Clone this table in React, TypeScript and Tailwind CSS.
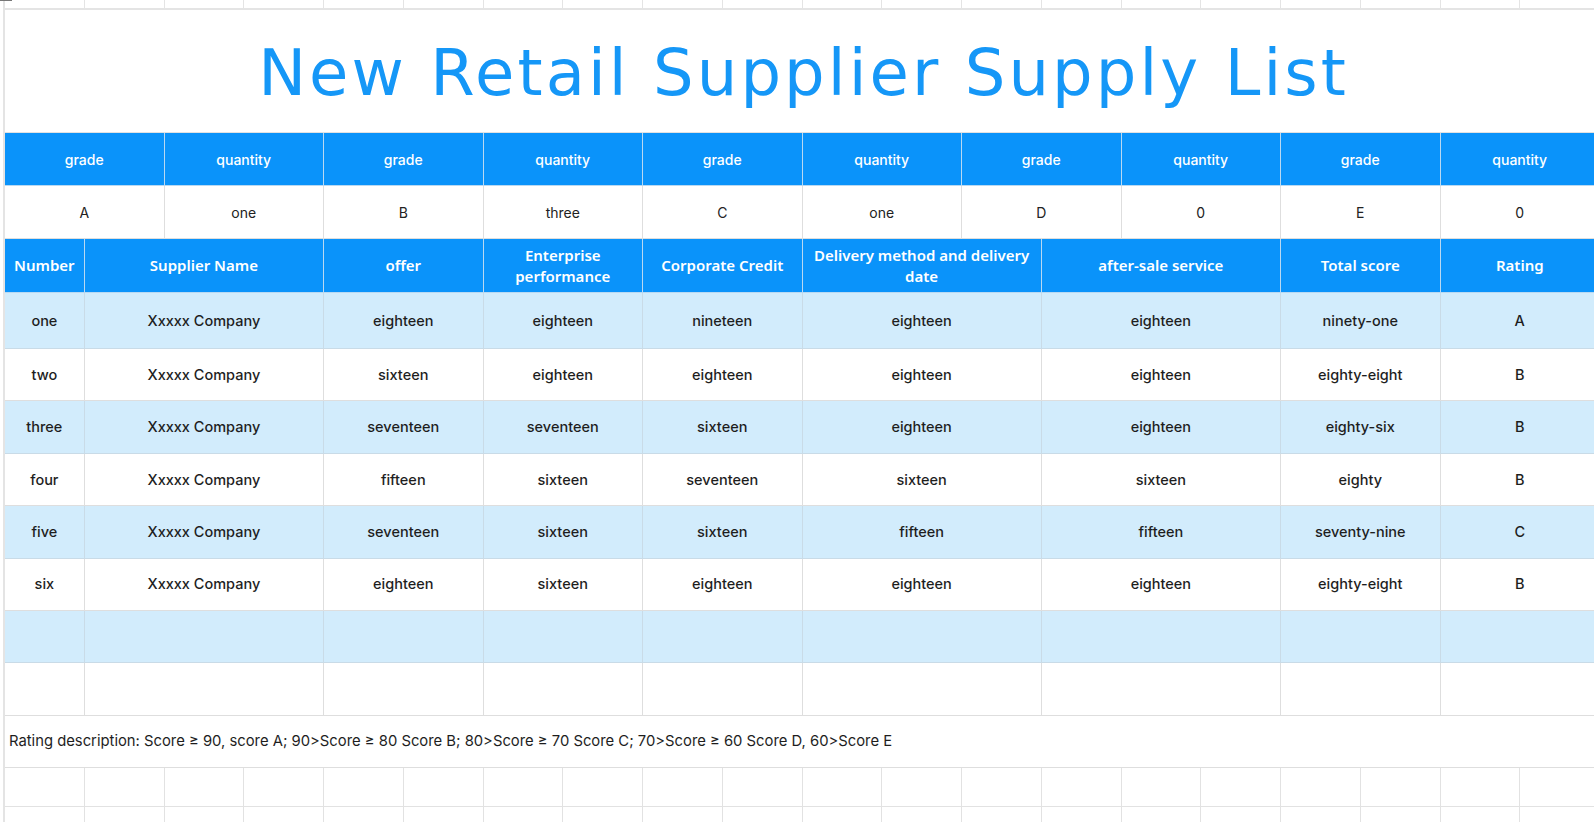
import React from "react";

const GRID = "grid grid-cols-[repeat(20,79.75px)]";

const head1 = ["grade", "quantity", "grade", "quantity", "grade", "quantity", "grade", "quantity", "grade", "quantity"];
const vals = ["A", "one", "B", "three", "C", "one", "D", "0", "E", "0"];

const head2: [string, string][] = [
  ["Number", "col-span-1"],
  ["Supplier Name", "col-span-3"],
  ["offer", "col-span-2"],
  ["Enterprise performance", "col-span-2"],
  ["Corporate Credit", "col-span-2"],
  ["Delivery method and delivery date", "col-span-3"],
  ["after-sale service", "col-span-3"],
  ["Total score", "col-span-2"],
  ["Rating", "col-span-2"],
];

const rows: string[][] = [
  ["one", "Xxxxx Company", "eighteen", "eighteen", "nineteen", "eighteen", "eighteen", "ninety-one", "A"],
  ["two", "Xxxxx Company", "sixteen", "eighteen", "eighteen", "eighteen", "eighteen", "eighty-eight", "B"],
  ["three", "Xxxxx Company", "seventeen", "seventeen", "sixteen", "eighteen", "eighteen", "eighty-six", "B"],
  ["four", "Xxxxx Company", "fifteen", "sixteen", "seventeen", "sixteen", "sixteen", "eighty", "B"],
  ["five", "Xxxxx Company", "seventeen", "sixteen", "sixteen", "fifteen", "fifteen", "seventy-nine", "C"],
  ["six", "Xxxxx Company", "eighteen", "sixteen", "eighteen", "eighteen", "eighteen", "eighty-eight", "B"],
  ["", "", "", "", "", "", "", "", ""],
  ["", "", "", "", "", "", "", "", ""],
];

function GridRow({ h }: { h: string }) {
  return (
    <div className={GRID}>
      {Array.from({ length: 20 }).map((_, i) => (
        <div key={i} className={`${h} border-r border-b border-[#e2e2e2]`} />
      ))}
    </div>
  );
}

export default function App() {
  return (
    <div className="w-[1594px] h-[822px] overflow-hidden bg-white relative" style={{ fontFamily: "Inter, 'Noto Sans', sans-serif" }}>
      <div className="absolute left-0 top-0 w-[12px] h-[1px] bg-[#777]" />
      <div className="ml-[3px] w-[1599px] border-l-2 border-[#e4e4e4]">
        {/* top partial grid row */}
        <div className={GRID}>
          {Array.from({ length: 20 }).map((_, i) => (
            <div key={i} className="h-[10px] border-r border-b-2 border-[#e4e4e4]" />
          ))}
        </div>
        {/* title */}
        <div className="h-[123px] flex items-center justify-center border-b border-[#e2e2e2]">
          <div
            className="text-[64px] leading-none text-[#1597f7] tracking-[0.048em] pt-[4px]"
            style={{ fontFamily: "'DejaVu Sans', sans-serif" }}
          >
            New Retail Supplier Supply List
          </div>
        </div>
        {/* header 1 */}
        <div className={GRID}>
          {head1.map((t, i) => (
            <div
              key={i}
              className="col-span-2 h-[53px] flex items-center justify-center bg-[#0a93fa] border-r border-b border-[#b9d9f2] text-white text-[14px] font-medium"
            >
              {t}
            </div>
          ))}
        </div>
        {/* values */}
        <div className={GRID}>
          {vals.map((t, i) => (
            <div
              key={i}
              className="col-span-2 h-[53px] flex items-center justify-center bg-white border-r border-b border-[#dedede] text-[#222] text-[14px]"
            >
              {t}
            </div>
          ))}
        </div>
        {/* header 2 */}
        <div className={GRID}>
          {head2.map(([t, span], i) => (
            <div
              key={i}
              className={`${span} h-[54px] flex items-center justify-center text-center px-[5px] bg-[#0a93fa] border-r border-b border-[#b9d9f2] text-white text-[15px] font-semibold leading-[21px]`}
              style={{ fontFamily: "'Noto Sans', sans-serif" }}
            >
              {t}
            </div>
          ))}
        </div>
        {/* data rows */}
        {rows.map((r, ri) => (
          <div key={ri} className={GRID}>
            {r.map((t, ci) => (
              <div
                key={ci}
                className={`${head2[ci][1]} ${ri === 0 ? "h-[56px]" : "h-[52.4px]"} flex items-center justify-center border-r border-b ${
                  ri % 2 === 0 ? "bg-[#d2ecfc] border-[#c9dbe7]" : "bg-white border-[#dedede]"
                } text-[#1e1e1e] text-[14.5px] font-medium`}
              >
                {t}
              </div>
            ))}
          </div>
        ))}
        {/* description */}
        <div className="h-[52px] flex items-center pl-[4px] border-b border-[#dedede] text-[#1e1e1e] text-[14.8px]">
          Rating description: Score ≥ 90, score A; 90&gt;Score ≥ 80 Score B; 80&gt;Score ≥ 70 Score C; 70&gt;Score ≥ 60 Score D, 60&gt;Score E
        </div>
        <GridRow h="h-[39px]" />
        <GridRow h="h-[39px]" />
      </div>
    </div>
  );
}
